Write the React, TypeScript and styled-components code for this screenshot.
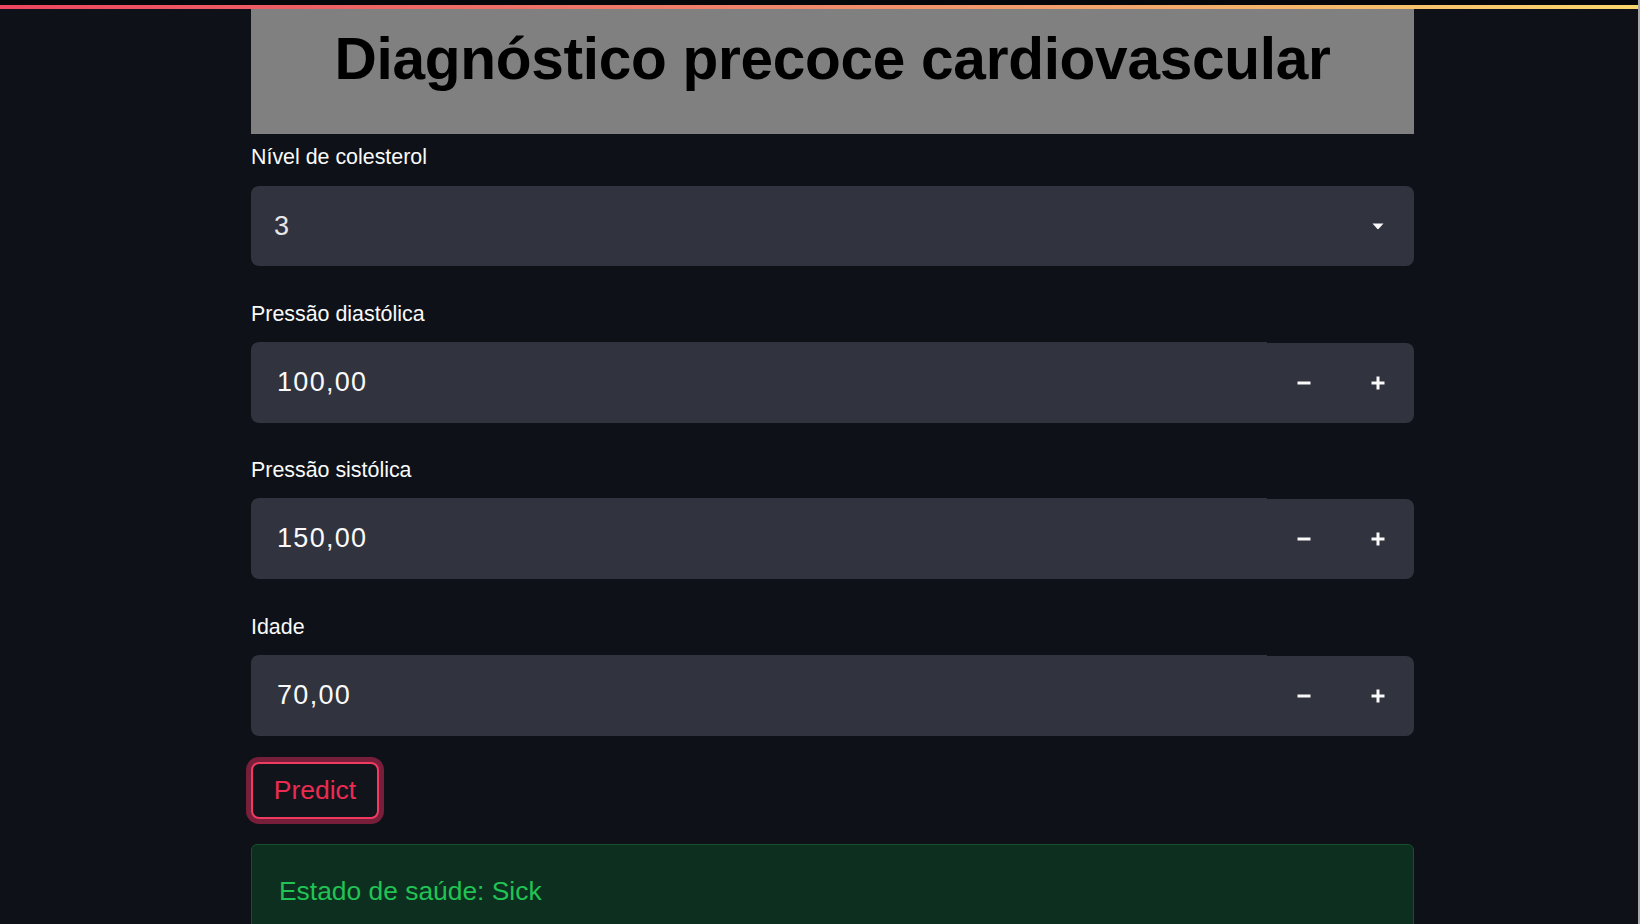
import React from "react";
import styled, { createGlobalStyle } from "styled-components";

const GlobalStyle = createGlobalStyle`
  html, body {
    margin: 0;
    padding: 0;
    background: #0e1117;
    overflow: hidden;
  }
  * { box-sizing: border-box; }
  body {
    font-family: "Liberation Sans", Arial, sans-serif;
  }
`;

const Page = styled.div`
  width: 1640px;
  height: 924px;
  border-right: 2px solid #a9a9ad;
  display: flex;
  flex-direction: column;
`;

const TopStrip = styled.div`
  height: 5px;
  background: #05070b;
  flex-shrink: 0;
`;

const Decoration = styled.div`
  height: 4px;
  background: linear-gradient(90deg, #ec4660 0%, #f08a6c 50%, #f9d66c 100%);
  flex-shrink: 0;
`;

const Main = styled.main`
  width: 1163px;
  margin-left: 251px;
  display: flex;
  flex-direction: column;
`;

const Header = styled.div`
  height: 125px;
  background: #808080;
  display: flex;
  justify-content: center;
  padding-top: 14px;
`;

const Title = styled.h1`
  margin: 0;
  font-family: "Liberation Sans", Arial, sans-serif;
  font-weight: 700;
  font-size: 58.6px;
  line-height: 71px;
  color: #000;
  letter-spacing: -0.3px;
`;

const Form = styled.div`
  margin-top: 10px;
  display: flex;
  flex-direction: column;
  gap: 34.7px;
`;

const Field = styled.div`
  display: flex;
  flex-direction: column;
`;

const Label = styled.label`
  font-size: 21.4px;
  line-height: 25px;
  padding-top: 1px;
  color: #fafafa;
  margin-bottom: 16px;
`;

const SelectBox = styled.div`
  height: 80px;
  background: #31333f;
  border-radius: 8px;
  display: flex;
  align-items: center;
  justify-content: space-between;
  padding: 0 30px 0 23px;
`;

const SelectValue = styled.span`
  font-size: 27px;
  color: #e6e6e9;
`;

const NumberWrap = styled.div`
  height: 80px;
  display: flex;
  align-items: flex-end;
`;

const NumberField = styled.input`
  flex: 1;
  height: 81px;
  min-width: 0;
  border: none;
  outline: none;
  background: #31333f;
  border-radius: 8px 0 0 8px;
  padding: 0 0 0 26px;
  font-family: "Liberation Sans", Arial, sans-serif;
  font-size: 27px;
  letter-spacing: 1.3px;
  color: #fafafa;
`;

const Steppers = styled.div`
  height: 80px;
  display: flex;
  background: #31333f;
  border-radius: 0 8px 8px 0;
`;

const StepButton = styled.button<{ $w: number }>`
  width: ${(p) => p.$w}px;
  height: 100%;
  border: none;
  background: transparent;
  display: flex;
  align-items: center;
  justify-content: center;
  padding: 0;
  color: #fafafa;
  cursor: pointer;
`;

const PredictButton = styled.button`
  margin-top: 26px;
  width: 128px;
  height: 57px;
  border: 2px solid #f03a61;
  border-radius: 8px;
  background: #12141c;
  color: #ec2b52;
  font-family: "Liberation Sans", Arial, sans-serif;
  font-size: 26.5px;
  box-shadow: 0 0 0 5px rgba(190, 40, 82, 0.6);
  padding: 0;
  cursor: pointer;
`;

const Success = styled.div`
  margin-top: 25px;
  background: #0d2f1f;
  border: 1px solid #17502a;
  border-radius: 6px;
  padding: 28px 27px 30px;
  font-size: 26.4px;
  line-height: 36px;
  color: #21c354;
`;

const Caret = () => (
  <svg width="12" height="7" viewBox="0 0 12 7">
    <path d="M0.5 0.5 L11.5 0.5 L6.8 5.8 Q6 6.6 5.2 5.8 Z" fill="#fafafa" />
  </svg>
);

const Minus = () => (
  <svg width="14" height="14" viewBox="0 0 14 14">
    <line x1="0.5" y1="7" x2="13.5" y2="7" stroke="#fafafa" strokeWidth="3" />
  </svg>
);

const Plus = () => (
  <svg width="14" height="14" viewBox="0 0 14 14">
    <line x1="0.5" y1="7" x2="13.5" y2="7" stroke="#fafafa" strokeWidth="3" />
    <line x1="7" y1="0.5" x2="7" y2="13.5" stroke="#fafafa" strokeWidth="3" />
  </svg>
);

const NumberInput = ({ label, value }: { label: string; value: string }) => (
  <Field>
    <Label>{label}</Label>
    <NumberWrap>
      <NumberField readOnly defaultValue={value} />
      <Steppers>
        <StepButton $w={74} aria-label="decrement">
          <Minus />
        </StepButton>
        <StepButton $w={73} aria-label="increment">
          <Plus />
        </StepButton>
      </Steppers>
    </NumberWrap>
  </Field>
);

export default function App() {
  return (
    <>
      <GlobalStyle />
      <Page>
        <TopStrip />
        <Decoration />
        <Main>
          <Header>
            <Title>Diagnóstico precoce cardiovascular</Title>
          </Header>
          <Form>
            <Field>
              <Label>Nível de colesterol</Label>
              <SelectBox>
                <SelectValue>3</SelectValue>
                <Caret />
              </SelectBox>
            </Field>
            <NumberInput label="Pressão diastólica" value="100,00" />
            <NumberInput label="Pressão sistólica" value="150,00" />
            <NumberInput label="Idade" value="70,00" />
          </Form>
          <PredictButton>Predict</PredictButton>
          <Success>Estado de saúde: Sick</Success>
        </Main>
      </Page>
    </>
  );
}
